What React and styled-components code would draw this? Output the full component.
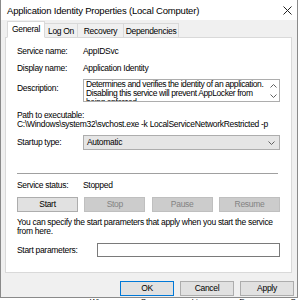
import React from "react";
import styled, { createGlobalStyle } from "styled-components";

const Global = createGlobalStyle`
  *, *::before, *::after { box-sizing: border-box; }
  html, body { margin: 0; padding: 0; background: #fff; }
  body {
    font-family: "Liberation Sans", Arial, sans-serif;
    font-size: 8.5px;
    letter-spacing: -0.3px;
    line-height: 11px;
    color: #000;
  }
`;

const Window = styled.div`
  width: 298px;
  height: 298px;
  border: 1px solid #8a8a8a;
  border-top: none;
  background: #f0f0f0;
  display: flex;
  flex-direction: column;
  overflow: hidden;
`;

const TitleBar = styled.div`
  flex-shrink: 0;
  height: 20px;
  background: #fff;
  display: flex;
  align-items: center;
  justify-content: space-between;
  padding: 0 4px 0 6px;
  font-size: 9.5px;
  letter-spacing: -0.2px;
`;

const Close = styled.svg`
  width: 9px;
  height: 9px;
  margin-right: 1px;
`;

const Body = styled.div`
  flex-shrink: 0;
  padding: 1px 5px 0 4px;
  display: flex;
  flex-direction: column;
`;

const Tabs = styled.div`
  display: flex;
  align-items: flex-end;
  height: 16px;
  padding-left: 2px;
`;

const Tab = styled.div`
  width: ${(p) => p.$w}px;
  height: ${(p) => (p.$active ? "17px" : "14px")};
  background: ${(p) => (p.$active ? "#fff" : "#f0f0f0")};
  border: 1px solid #d9d9d9;
  border-bottom: ${(p) => (p.$active ? "1px solid #fff" : "none")};
  margin-bottom: ${(p) => (p.$active ? "-1px" : "0")};
  margin-left: ${(p) => (p.$active ? "0" : "-1px")};
  display: flex;
  align-items: center;
  justify-content: center;
  padding-top: ${(p) => (p.$active ? "0" : "1px")};
  position: relative;
  z-index: ${(p) => (p.$active ? 1 : 0)};
`;

const Panel = styled.div`
  background: #fff;
  border: 1px solid #d9d9d9;
  height: 236px;
  padding: 8px 11px 0 11px;
  display: flex;
  flex-direction: column;
`;

const Row = styled.div`
  display: grid;
  grid-template-columns: ${(p) => p.$col || 66}px 1fr;
  align-items: ${(p) => (p.$top ? "start" : "center")};
  margin-top: ${(p) => p.$mt || 0}px;
  min-height: 11px;
`;

const Label = styled.span`
  padding-top: ${(p) => p.$pt || 0}px;
`;

const DescBox = styled.div`
  height: 23px;
  border: 1px solid #adadad;
  display: flex;
  overflow: hidden;
`;

const DescText = styled.div`
  flex: 1;
  padding: 0 1px 0 2px;
  line-height: 9px;
  letter-spacing: -0.4px;
`;

const Scroll = styled.div`
  width: 12px;
  display: flex;
  flex-direction: column;
  justify-content: space-between;
  align-items: center;
  padding: 4px 0 3px;
`;

const Text = styled.div`
  margin-top: ${(p) => p.$mt || 0}px;
  line-height: 9px;
  white-space: ${(p) => (p.$nowrap ? "nowrap" : "normal")};
`;

const Combo = styled.div`
  height: 15px;
  background: #e5e5e5;
  border: 1px solid #adadad;
  display: flex;
  align-items: center;
  justify-content: space-between;
  padding: 0 4px 0 3px;
`;

const Divider = styled.div`
  height: 1px;
  background: #a0a0a0;
  margin-top: 23px;
  margin-right: 2px;
`;

const ButtonRow = styled.div`
  display: grid;
  grid-template-columns: repeat(4, 61px);
  justify-content: space-between;
  margin-top: 6px;
`;

const Button = styled.div`
  height: 15px;
  border: 1px solid ${(p) => (p.$disabled ? "#bfbfbf" : p.$primary ? "#0078d7" : "#adadad")};
  background: ${(p) => (p.$disabled ? "#cccccc" : "#e1e1e1")};
  color: ${(p) => (p.$disabled ? "#838383" : "#000")};
  display: flex;
  align-items: center;
  justify-content: center;
`;

const Input = styled.div`
  height: 14px;
  border: 1px solid #7a7a7a;
  background: #fff;
`;

const Footer = styled.div`
  display: grid;
  grid-template-columns: repeat(3, 54px);
  gap: 6px;
  justify-content: end;
  padding-top: 8px;
  margin-right: -2px;
`;

const Behind = styled.div`
  height: 2px;
  overflow: hidden;
  background: #fff;
  font-size: 8px;
  line-height: 8px;
  padding-left: 90px;
  word-spacing: 40px;
`;

const Chevron = ({ up }) => (
  <svg width="7" height="4" viewBox="0 0 7 4">
    <path
      d={up ? "M0.5 3.5 L3.5 0.5 L6.5 3.5" : "M0.5 0.5 L3.5 3.5 L6.5 0.5"}
      fill="none"
      stroke="#606060"
      strokeWidth="1"
    />
  </svg>
);

export default function App() {
  return (
    <>
      <Global />
      <Window>
        <TitleBar>
          <span>Application Identity Properties (Local Computer)</span>
          <Close viewBox="0 0 9 9">
            <path d="M0.5 0.5 L8.5 8.5 M8.5 0.5 L0.5 8.5" stroke="#222" strokeWidth="1" />
          </Close>
        </TitleBar>
        <Body>
          <Tabs>
            <Tab $active $w={38}>General</Tab>
            <Tab $w={34}>Log On</Tab>
            <Tab $w={47}>Recovery</Tab>
            <Tab $w={56}>Dependencies</Tab>
          </Tabs>
          <Panel>
            <Row>
              <Label>Service name:</Label>
              <span>AppIDSvc</span>
            </Row>
            <Row $mt={6}>
              <Label>Display name:</Label>
              <span>Application Identity</span>
            </Row>
            <Row $mt={5} $top>
              <Label $pt={4}>Description:</Label>
              <DescBox>
                <DescText>
                  Determines and verifies the identity of an application.
                  Disabling this service will prevent AppLocker from being
                  enforced.
                </DescText>
                <Scroll>
                  <Chevron up />
                  <Chevron />
                </Scroll>
              </DescBox>
            </Row>
            <Text $mt={9}>Path to executable:</Text>
            <Text $nowrap>
              C:\Windows\system32\svchost.exe -k LocalServiceNetworkRestricted -p
            </Text>
            <Row $mt={6}>
              <Label>Startup type:</Label>
              <Combo>
                <span>Automatic</span>
                <Chevron />
              </Combo>
            </Row>
            <Divider />
            <Row $mt={6}>
              <Label>Service status:</Label>
              <span>Stopped</span>
            </Row>
            <ButtonRow>
              <Button>Start</Button>
              <Button $disabled>Stop</Button>
              <Button $disabled>Pause</Button>
              <Button $disabled>Resume</Button>
            </ButtonRow>
            <Text $mt={6}>
              You can specify the start parameters that apply when you start the
              service from here.
            </Text>
            <Row $mt={7} $col={80}>
              <Label>Start parameters:</Label>
              <Input />
            </Row>
          </Panel>
          <Footer>
            <Button $primary>OK</Button>
            <Button>Cancel</Button>
            <Button>Apply</Button>
          </Footer>
        </Body>
      </Window>
      <Behind>Wi Sa hi Ea Sa</Behind>
    </>
  );
}
